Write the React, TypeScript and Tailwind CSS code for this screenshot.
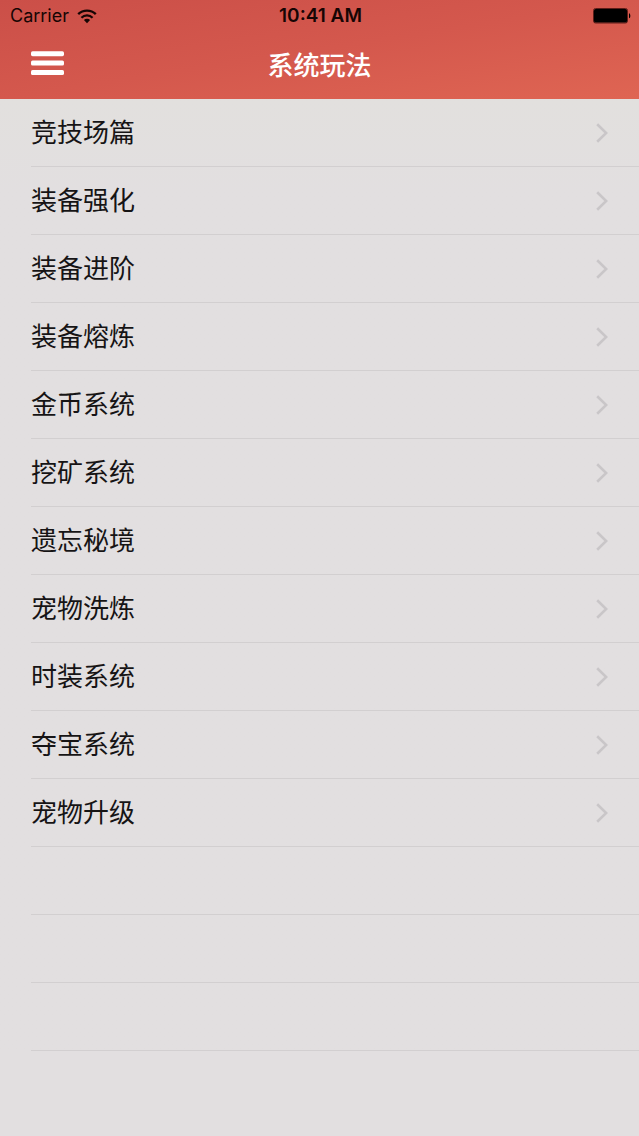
/**
 * App.tsx - Lista de guias do sistema de jogo
 */

const guides = [
  '竞技场篇',
  '装备强化',
  '装备进阶',
  '装备熔炼',
  '金币系统',
  '挖矿系统',
  '遗忘秘境',
  '宠物洗炼',
  '时装系统',
  '夺宝系统',
  '宠物升级',
];

const EMPTY_ROWS = 3;

function WifiIcon() {
  return (
    <svg viewBox="0 0 20 15" className="h-[15px] w-5" fill="none" aria-hidden="true">
      <path d="M1.2 5.2a12.6 12.6 0 0 1 17.6 0" stroke="currentColor" strokeWidth="2.4" />
      <path d="M4.4 8.7a8 8 0 0 1 11.2 0" stroke="currentColor" strokeWidth="2.3" />
      <path d="M10 14.2 6.9 11.1a4.4 4.4 0 0 1 6.2 0Z" fill="currentColor" />
    </svg>
  );
}

function BatteryIcon() {
  return (
    <svg viewBox="0 0 38 16" className="h-4 w-[38px]" aria-hidden="true">
      <rect x="0.5" y="0.5" width="34" height="14.5" rx="2" stroke="#5c1d18" fill="none" />
      <rect x="1" y="1" width="33" height="13.5" rx="1.5" fill="#000" />
      <path d="M36 5.2c1.8.5 1.8 4.6 0 5.1Z" fill="#000" />
    </svg>
  );
}

function MenuIcon() {
  return (
    <svg viewBox="0 0 33 25" className="h-[25px] w-[33px]" fill="currentColor" aria-hidden="true">
      <rect y="0.2" width="33" height="5" rx="1.6" />
      <rect y="9.6" width="33" height="5" rx="1.6" />
      <rect y="19" width="33" height="5" rx="1.6" />
    </svg>
  );
}

function ChevronIcon() {
  return (
    <svg viewBox="0 0 12 20" className="h-5 w-3" fill="none" aria-hidden="true">
      <path d="M1.2 1.2 10.2 10l-9 8.8" stroke="#c9c6c8" strokeWidth="2.6" />
    </svg>
  );
}

export default function App() {
  return (
    <div className="min-h-screen bg-[#e2dfe0] font-['Inter','Noto_Sans_CJK_SC',sans-serif] text-[#161415]">
      {/* Header */}
      <header className="bg-linear-to-br from-[#cb4f48] via-[#d4584d] to-[#df6553]">
        {/* Status */}
        <div className="grid h-8 grid-cols-[1fr_auto_1fr] items-center pr-2 pl-[10px] text-[#160504]">
          <div className="flex items-center gap-2 text-lg">
            <span>Carrier</span>
            <WifiIcon />
          </div>
          <span className="text-center text-[19px] font-semibold">10:41 AM</span>
          <div className="flex justify-end">
            <BatteryIcon />
          </div>
        </div>

        {/* Navbar */}
        <div className="grid h-[67px] grid-cols-3 items-center px-[31px] text-white">
          <button type="button" aria-label="菜单" className="justify-self-start pb-1">
            <MenuIcon />
          </button>
          <h1 className="text-center text-[26px] leading-8 font-medium">系统玩法</h1>
        </div>
      </header>

      {/* Lista */}
      <main>
        <ul className="bg-linear-to-b from-[#e2e0de] to-[#e2dfe0] to-10% pl-[31px]">
          {guides.map((guide) => (
            <li key={guide} className="border-b border-[#d2cfd0]">
              <a href="#" className="flex h-[67px] items-center justify-between pr-[31px]">
                <span className="text-[26px] leading-8">{guide}</span>
                <ChevronIcon />
              </a>
            </li>
          ))}
          {Array.from({ length: EMPTY_ROWS }, (_, i) => (
            <li key={i} aria-hidden="true" className="h-[68px] border-b border-[#d2cfd0]" />
          ))}
        </ul>
      </main>
    </div>
  );
}
